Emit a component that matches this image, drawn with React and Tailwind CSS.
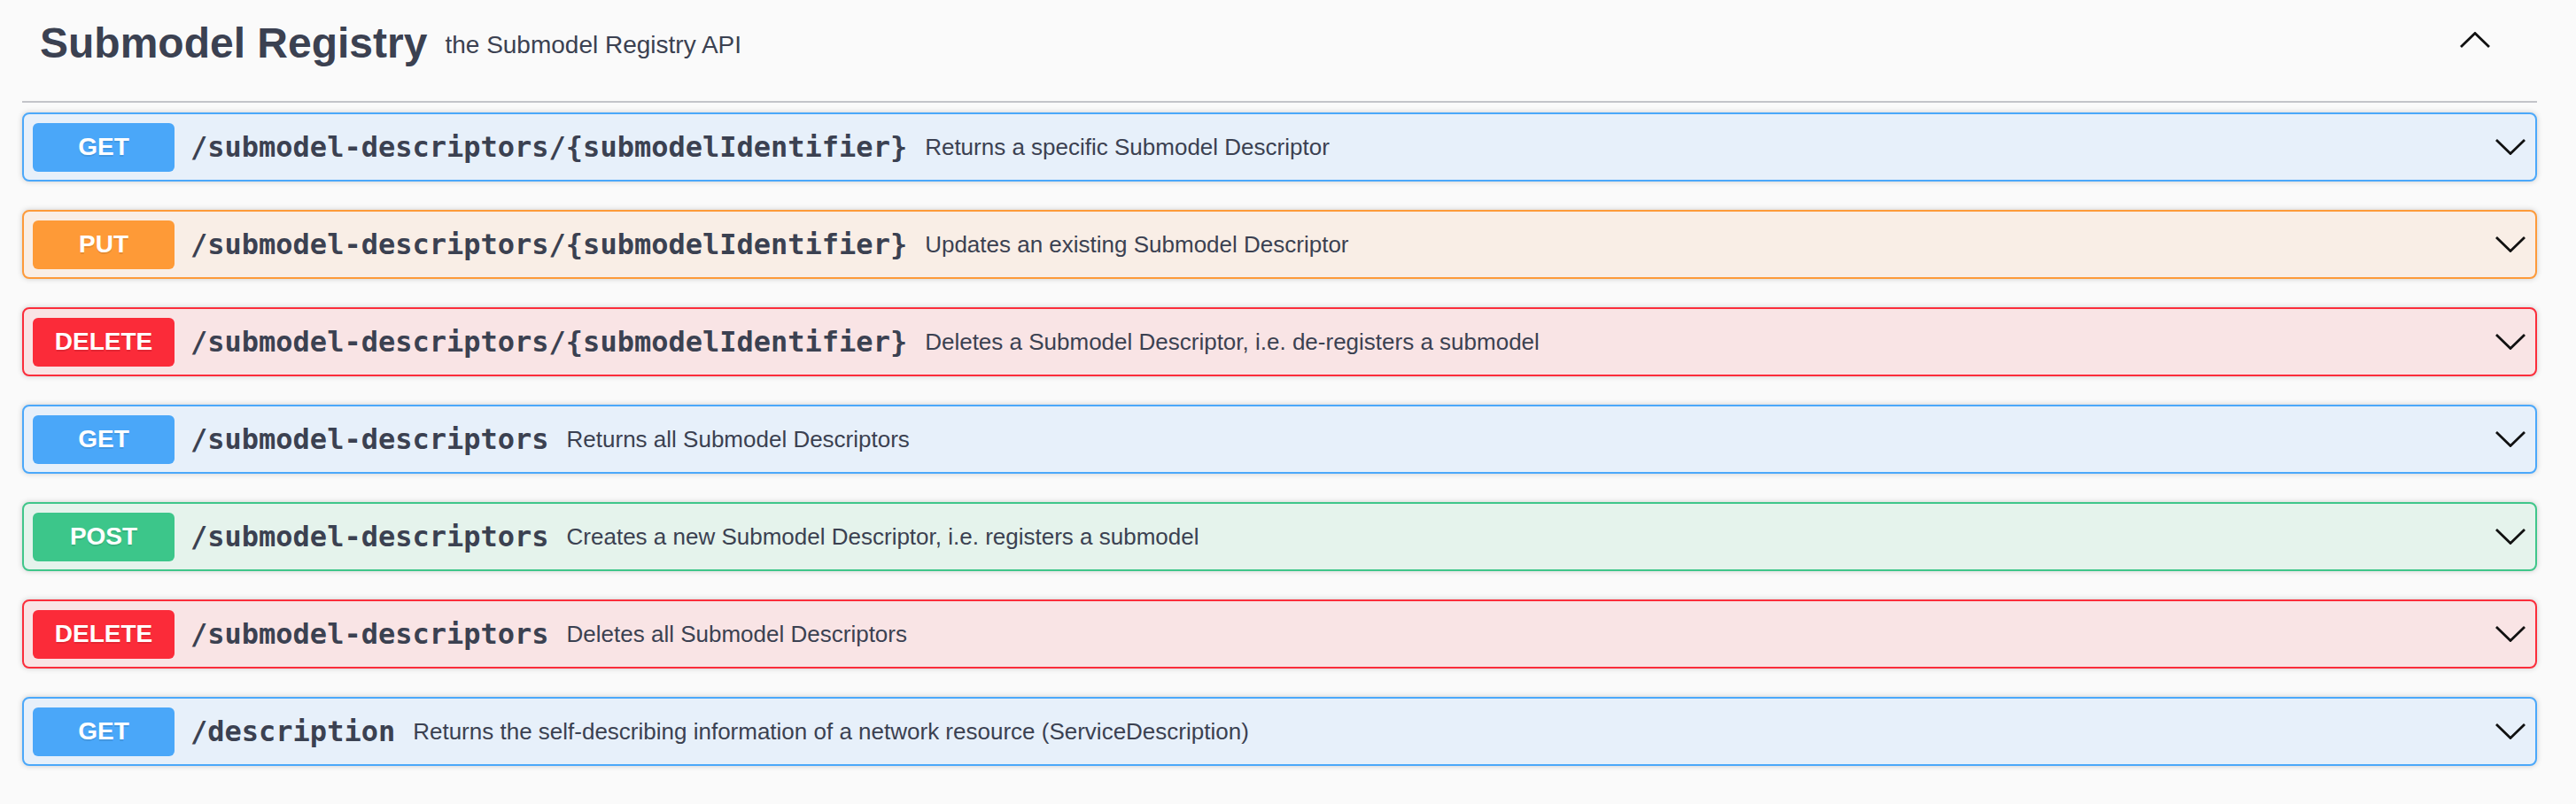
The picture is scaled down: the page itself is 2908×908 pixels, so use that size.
import React from 'react'

const methodStyles = {
  get: {
    block: 'border-[#4ba8fa] bg-[#e7f0fa]',
    badge: 'bg-[#4aa7f9]'
  },
  put: {
    block: 'border-[#fd9a3a] bg-[#f9eee6]',
    badge: 'bg-[#fe9a37]'
  },
  delete: {
    block: 'border-[#fb2d3b] bg-[#f9e4e5]',
    badge: 'bg-[#fb2b39]'
  },
  post: {
    block: 'border-[#3fc68a] bg-[#e5f3ec]',
    badge: 'bg-[#3cc68a]'
  }
}

const endpoints = [
  { method: 'get', path: '/submodel-descriptors/{submodelIdentifier}', summary: 'Returns a specific Submodel Descriptor' },
  { method: 'put', path: '/submodel-descriptors/{submodelIdentifier}', summary: 'Updates an existing Submodel Descriptor' },
  { method: 'delete', path: '/submodel-descriptors/{submodelIdentifier}', summary: 'Deletes a Submodel Descriptor, i.e. de-registers a submodel' },
  { method: 'get', path: '/submodel-descriptors', summary: 'Returns all Submodel Descriptors' },
  { method: 'post', path: '/submodel-descriptors', summary: 'Creates a new Submodel Descriptor, i.e. registers a submodel' },
  { method: 'delete', path: '/submodel-descriptors', summary: 'Deletes all Submodel Descriptors' },
  { method: 'get', path: '/description', summary: 'Returns the self-describing information of a network resource (ServiceDescription)' }
]

const Chevron = ({ up }) => (
  <svg width="34" height="18" viewBox="0 0 34 18" fill="none" aria-hidden="true">
    <polyline
      points={up ? '1,17 17,1.5 33,17' : '1,1 17,16.5 33,1'}
      stroke="#111"
      strokeWidth="2.8"
      strokeLinejoin="miter"
    />
  </svg>
)

const Operation = ({ method, path, summary }) => {
  const s = methodStyles[method]
  return (
    <div
      className={`flex items-center h-[78px] mb-[32px] border-2 rounded-[8px] pl-[10px] pr-[11px] shadow-[0_0_6px_rgba(0,0,0,0.19)] ${s.block}`}
    >
      <span
        className={`flex items-center justify-center w-[160px] h-[55px] shrink-0 rounded-[6px] text-white text-[28px] font-bold [text-shadow:0_2px_0_rgba(0,0,0,0.1)] ${s.badge}`}
      >
        {method.toUpperCase()}
      </span>
      <span className="pl-[18px] pr-[20px] font-['DejaVu_Sans_Mono',monospace] font-bold text-[32px] text-[#3b4151] whitespace-nowrap">
        {path}
      </span>
      <span className="flex-1 text-[26px] text-[#3b4151] whitespace-nowrap">{summary}</span>
      <Chevron />
    </div>
  )
}

export default function App() {
  return (
    <div className="min-h-screen bg-[#fafafa] font-['Liberation_Sans',Arial,sans-serif] pl-[25px] pr-[44px]">
      <div className="flex items-center pt-[21px] pb-[38px] pl-[20px] pr-[53px] border-b-2 border-[#c3c4c9]">
        <h3 className="text-[48px] leading-[55px] font-bold text-[#3b4151]">Submodel Registry</h3>
        <small className="ml-[20px] mt-[4px] text-[28px] text-[#3b4151]">the Submodel Registry API</small>
        <div className="flex-1" />
        <div className="mb-[7px]">
          <Chevron up />
        </div>
      </div>
      <div className="pt-[11px]">
        {endpoints.map((op, i) => (
          <Operation key={i} {...op} />
        ))}
      </div>
    </div>
  )
}
